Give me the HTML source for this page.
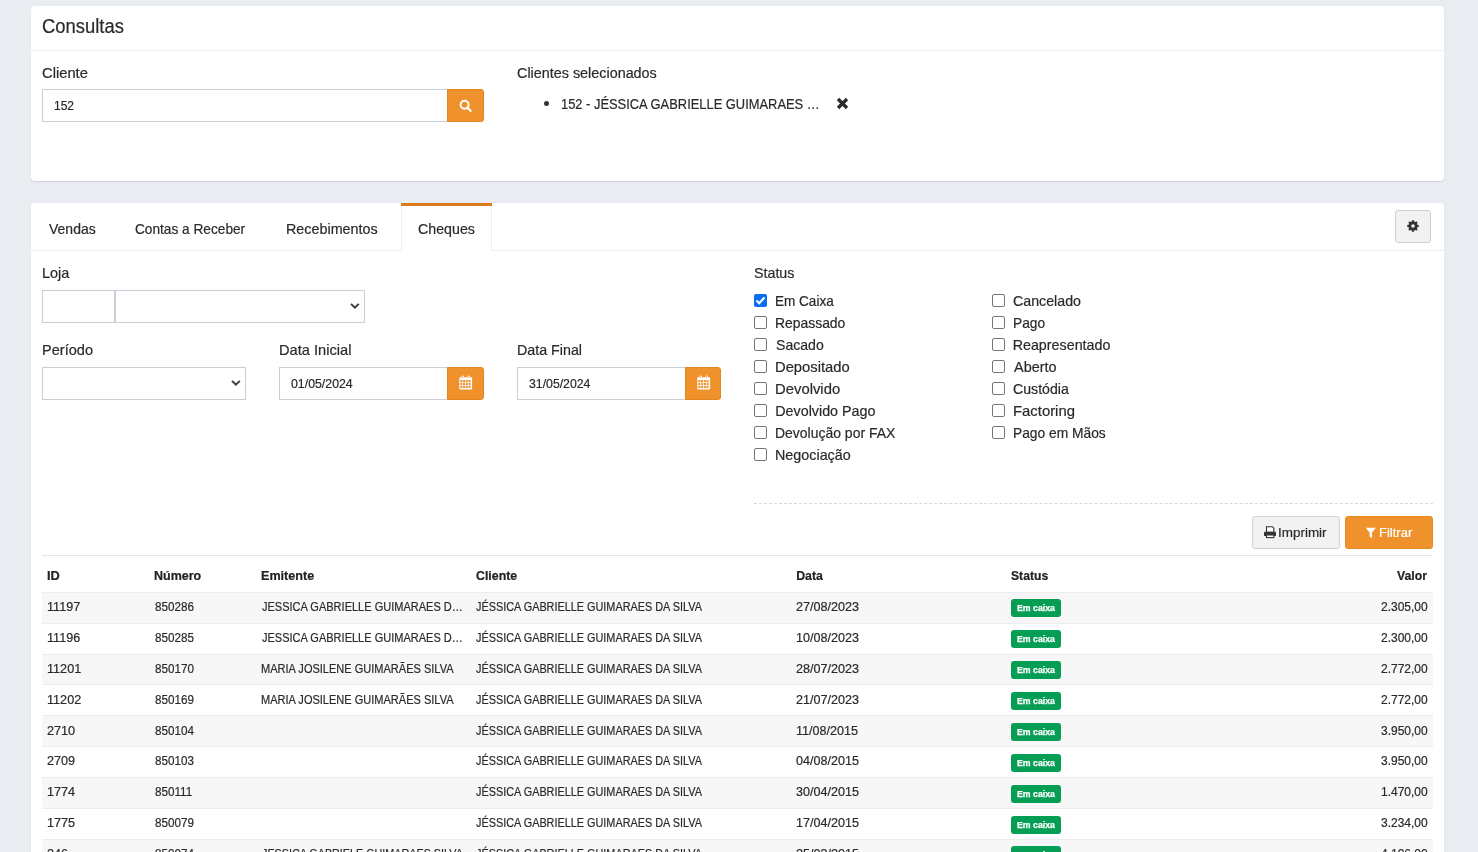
<!DOCTYPE html>
<html><head><meta charset="utf-8"><style>
html,body{margin:0;padding:0;}
body{width:1478px;height:852px;overflow:hidden;background:#e9edf2;position:relative;font-family:"Liberation Sans",sans-serif;}
.t{position:absolute;white-space:nowrap;line-height:1;transform-origin:0 0;-webkit-text-stroke:0.2px currentColor;}
.b{position:absolute;}
</style></head><body><div id="w" style="position:absolute;left:0;top:0;width:1478px;height:852px;overflow:hidden;will-change:transform;">
<div class="b" style="left:31px;top:6px;width:1413px;height:175px;background:#fff;border-radius:4px;box-shadow:0 1px 1px rgba(0,0,0,.12);"></div>
<div class="b" style="left:31px;top:50px;width:1413px;height:1px;background:#f0f0f0;"></div>
<div class="t" style="left:41.98px;top:16.98px;font-size:19.4px;color:#2a2a2a;font-weight:normal;transform:scaleX(0.9494);">Consultas</div>
<div class="t" style="left:41.76px;top:66.15px;font-size:14px;color:#2a2a2a;font-weight:normal;transform:scaleX(1.0525);">Cliente</div>
<div class="b" style="left:42px;top:89px;width:406px;height:33px;border:1px solid #c9ced8;box-sizing:border-box;background:#fff;"></div>
<div class="t" style="left:53.70px;top:100.33px;font-size:12.6px;color:#2a2a2a;font-weight:normal;transform:scaleX(0.9503);">152</div>
<div class="b" style="left:447px;top:89px;width:37px;height:33px;background:#f0922b;border:1px solid #e3861f;box-sizing:border-box;border-radius:0 3px 3px 0;"></div>
<svg class="b" style="left:457px;top:98px" width="18" height="18" viewBox="0 0 18 18"><circle cx="7.6" cy="6.8" r="4" fill="none" stroke="#fff" stroke-width="1.9"/><line x1="10.4" y1="9.6" x2="13.6" y2="12.8" stroke="#fff" stroke-width="2.2" stroke-linecap="round"/></svg>
<div class="t" style="left:516.68px;top:66.15px;font-size:14px;color:#2a2a2a;font-weight:normal;transform:scaleX(1.0264);">Clientes selecionados</div>
<div class="b" style="left:544px;top:101px;width:5px;height:5px;background:#333;border-radius:50%;"></div>
<div class="t" style="left:561.03px;top:97.15px;font-size:14px;color:#2a2a2a;font-weight:normal;transform:scaleX(0.9210);">152 - JÉSSICA GABRIELLE GUIMARAES …</div>
<svg class="b" style="left:836px;top:97px" width="13" height="13" viewBox="0 0 13 13"><path d="M2 2 L11 11 M11 2 L2 11" stroke="#2b2b2b" stroke-width="3.3" stroke-linecap="butt"/></svg>
<div class="b" style="left:31px;top:203px;width:1413px;height:697px;background:#fff;border-radius:4px;box-shadow:0 1px 1px rgba(0,0,0,.12);"></div>
<div class="b" style="left:31px;top:250px;width:1413px;height:1px;background:#eeeeee;"></div>
<div class="t" style="left:48.80px;top:221.90px;font-size:14.3px;color:#2a2a2a;font-weight:normal;transform:scaleX(0.9790);">Vendas</div>
<div class="t" style="left:135.42px;top:221.90px;font-size:14.3px;color:#2a2a2a;font-weight:normal;transform:scaleX(0.9560);">Contas a Receber</div>
<div class="t" style="left:286.45px;top:221.90px;font-size:14.3px;color:#2a2a2a;font-weight:normal;transform:scaleX(1.0030);">Recebimentos</div>
<div class="b" style="left:401px;top:203px;width:91px;height:48px;background:#fff;border-left:1px solid #eee;border-right:1px solid #eee;box-sizing:border-box;"></div>
<div class="b" style="left:401px;top:203px;width:91px;height:3px;background:#dc7c1d;"></div>
<div class="t" style="left:418.49px;top:221.90px;font-size:14.3px;color:#2a2a2a;font-weight:normal;transform:scaleX(0.9954);">Cheques</div>
<div class="b" style="left:1395px;top:210px;width:36px;height:33px;background:#f2f2f2;border:1px solid #cfcfcf;box-sizing:border-box;border-radius:3px;"></div>
<svg class="b" style="left:1400px;top:213.3px" width="26" height="26" viewBox="0 0 26 26"><rect x="11.85" y="7.3" width="2.3" height="2.6" transform="rotate(0 13 13)" fill="#333"/><rect x="11.85" y="7.3" width="2.3" height="2.6" transform="rotate(45 13 13)" fill="#333"/><rect x="11.85" y="7.3" width="2.3" height="2.6" transform="rotate(90 13 13)" fill="#333"/><rect x="11.85" y="7.3" width="2.3" height="2.6" transform="rotate(135 13 13)" fill="#333"/><rect x="11.85" y="7.3" width="2.3" height="2.6" transform="rotate(180 13 13)" fill="#333"/><rect x="11.85" y="7.3" width="2.3" height="2.6" transform="rotate(225 13 13)" fill="#333"/><rect x="11.85" y="7.3" width="2.3" height="2.6" transform="rotate(270 13 13)" fill="#333"/><rect x="11.85" y="7.3" width="2.3" height="2.6" transform="rotate(315 13 13)" fill="#333"/><circle cx="13" cy="13" r="4.5" fill="#333"/><circle cx="13" cy="13" r="1.8" fill="#f2f2f2"/></svg>
<div class="t" style="left:41.65px;top:265.90px;font-size:14.3px;color:#2a2a2a;font-weight:normal;transform:scaleX(1.0095);">Loja</div>
<div class="b" style="left:42px;top:290px;width:74px;height:33px;border:1px solid #c9ced8;box-sizing:border-box;"></div>
<div class="b" style="left:114px;top:290px;width:251px;height:33px;border:1px solid #c9ced8;box-sizing:border-box;"></div>
<svg class="b" style="left:350px;top:302px" width="11" height="8" viewBox="0 0 11 8"><path d="M1.0 1.9 L4.9 5.7 L8.8 1.9" fill="none" stroke="#3a3a3a" stroke-width="2"/></svg>
<div class="t" style="left:41.64px;top:342.90px;font-size:14.3px;color:#2a2a2a;font-weight:normal;transform:scaleX(1.0179);">Período</div>
<div class="b" style="left:42px;top:367px;width:204px;height:33px;border:1px solid #c9ced8;box-sizing:border-box;"></div>
<svg class="b" style="left:231px;top:379px" width="11" height="8" viewBox="0 0 11 8"><path d="M1.0 1.9 L4.9 5.7 L8.8 1.9" fill="none" stroke="#3a3a3a" stroke-width="2"/></svg>
<div class="t" style="left:278.83px;top:342.90px;font-size:14.3px;color:#2a2a2a;font-weight:normal;transform:scaleX(1.0246);">Data Inicial</div>
<div class="b" style="left:279px;top:367px;width:169px;height:33px;border:1px solid #c9ced8;box-sizing:border-box;"></div>
<div class="t" style="left:291.17px;top:377.73px;font-size:12.6px;color:#2a2a2a;font-weight:normal;transform:scaleX(0.9790);">01/05/2024</div>
<div class="b" style="left:447px;top:367px;width:37px;height:33px;background:#f0922b;border:1px solid #e3861f;box-sizing:border-box;border-radius:0 3px 3px 0;"></div>
<svg class="b" style="left:459px;top:375px" width="14" height="15" viewBox="0 0 14 15"><rect x="0.3" y="2.2" width="12.8" height="12.2" rx="1" fill="#fff"/><rect x="1.30" y="5.00" width="2.0" height="2.2" fill="#f0922b"/><rect x="1.30" y="7.95" width="2.0" height="2.2" fill="#f0922b"/><rect x="1.30" y="10.90" width="2.0" height="2.2" fill="#f0922b"/><rect x="4.05" y="5.00" width="2.0" height="2.2" fill="#f0922b"/><rect x="4.05" y="7.95" width="2.0" height="2.2" fill="#f0922b"/><rect x="4.05" y="10.90" width="2.0" height="2.2" fill="#f0922b"/><rect x="6.80" y="5.00" width="2.0" height="2.2" fill="#f0922b"/><rect x="6.80" y="7.95" width="2.0" height="2.2" fill="#f0922b"/><rect x="6.80" y="10.90" width="2.0" height="2.2" fill="#f0922b"/><rect x="9.55" y="5.00" width="2.0" height="2.2" fill="#f0922b"/><rect x="9.55" y="7.95" width="2.0" height="2.2" fill="#f0922b"/><rect x="9.55" y="10.90" width="2.0" height="2.2" fill="#f0922b"/><rect x="2.6" y="0.4" width="2.2" height="3.6" rx="1.1" fill="#fff"/><rect x="3.35" y="1.3" width="0.7" height="2" fill="#f0922b"/><rect x="8.6" y="0.4" width="2.2" height="3.6" rx="1.1" fill="#fff"/><rect x="9.35" y="1.3" width="0.7" height="2" fill="#f0922b"/></svg>
<div class="t" style="left:516.86px;top:342.90px;font-size:14.3px;color:#2a2a2a;font-weight:normal;transform:scaleX(0.9979);">Data Final</div>
<div class="b" style="left:517px;top:367px;width:169px;height:33px;border:1px solid #c9ced8;box-sizing:border-box;"></div>
<div class="t" style="left:528.87px;top:377.73px;font-size:12.6px;color:#2a2a2a;font-weight:normal;transform:scaleX(0.9742);">31/05/2024</div>
<div class="b" style="left:685px;top:367px;width:36px;height:33px;background:#f0922b;border:1px solid #e3861f;box-sizing:border-box;border-radius:0 3px 3px 0;"></div>
<svg class="b" style="left:697px;top:375px" width="14" height="15" viewBox="0 0 14 15"><rect x="0.3" y="2.2" width="12.8" height="12.2" rx="1" fill="#fff"/><rect x="1.30" y="5.00" width="2.0" height="2.2" fill="#f0922b"/><rect x="1.30" y="7.95" width="2.0" height="2.2" fill="#f0922b"/><rect x="1.30" y="10.90" width="2.0" height="2.2" fill="#f0922b"/><rect x="4.05" y="5.00" width="2.0" height="2.2" fill="#f0922b"/><rect x="4.05" y="7.95" width="2.0" height="2.2" fill="#f0922b"/><rect x="4.05" y="10.90" width="2.0" height="2.2" fill="#f0922b"/><rect x="6.80" y="5.00" width="2.0" height="2.2" fill="#f0922b"/><rect x="6.80" y="7.95" width="2.0" height="2.2" fill="#f0922b"/><rect x="6.80" y="10.90" width="2.0" height="2.2" fill="#f0922b"/><rect x="9.55" y="5.00" width="2.0" height="2.2" fill="#f0922b"/><rect x="9.55" y="7.95" width="2.0" height="2.2" fill="#f0922b"/><rect x="9.55" y="10.90" width="2.0" height="2.2" fill="#f0922b"/><rect x="2.6" y="0.4" width="2.2" height="3.6" rx="1.1" fill="#fff"/><rect x="3.35" y="1.3" width="0.7" height="2" fill="#f0922b"/><rect x="8.6" y="0.4" width="2.2" height="3.6" rx="1.1" fill="#fff"/><rect x="9.35" y="1.3" width="0.7" height="2" fill="#f0922b"/></svg>
<div class="t" style="left:754.06px;top:265.90px;font-size:14.3px;color:#2a2a2a;font-weight:normal;transform:scaleX(0.9976);">Status</div>
<div class="b" style="left:754px;top:294px;width:13px;height:13px;background:#0b6cf4;border-radius:2px;"></div>
<svg class="b" style="left:754px;top:294px" width="13" height="13" viewBox="0 0 13 13"><path d="M2.5 6.5 L5.2 9.2 L10.5 3.5" fill="none" stroke="#fff" stroke-width="2.1"/></svg>
<div class="t" style="left:775.32px;top:293.90px;font-size:14.3px;color:#2a2a2a;font-weight:normal;transform:scaleX(0.9472);">Em Caixa</div>
<div class="b" style="left:754px;top:316px;width:13px;height:13px;border:1px solid #767676;box-sizing:border-box;border-radius:2px;background:#fff;"></div>
<div class="t" style="left:775.29px;top:315.90px;font-size:14.3px;color:#2a2a2a;font-weight:normal;transform:scaleX(0.9725);">Repassado</div>
<div class="b" style="left:754px;top:338px;width:13px;height:13px;border:1px solid #767676;box-sizing:border-box;border-radius:2px;background:#fff;"></div>
<div class="t" style="left:775.77px;top:337.90px;font-size:14.3px;color:#2a2a2a;font-weight:normal;transform:scaleX(0.9839);">Sacado</div>
<div class="b" style="left:754px;top:360px;width:13px;height:13px;border:1px solid #767676;box-sizing:border-box;border-radius:2px;background:#fff;"></div>
<div class="t" style="left:775.22px;top:359.90px;font-size:14.3px;color:#2a2a2a;font-weight:normal;transform:scaleX(1.0320);">Depositado</div>
<div class="b" style="left:754px;top:382px;width:13px;height:13px;border:1px solid #767676;box-sizing:border-box;border-radius:2px;background:#fff;"></div>
<div class="t" style="left:775.21px;top:381.90px;font-size:14.3px;color:#2a2a2a;font-weight:normal;transform:scaleX(1.0383);">Devolvido</div>
<div class="b" style="left:754px;top:404px;width:13px;height:13px;border:1px solid #767676;box-sizing:border-box;border-radius:2px;background:#fff;"></div>
<div class="t" style="left:775.26px;top:403.90px;font-size:14.3px;color:#2a2a2a;font-weight:normal;">Devolvido Pago</div>
<div class="b" style="left:754px;top:426px;width:13px;height:13px;border:1px solid #767676;box-sizing:border-box;border-radius:2px;background:#fff;"></div>
<div class="t" style="left:775.28px;top:425.90px;font-size:14.3px;color:#2a2a2a;font-weight:normal;transform:scaleX(0.9767);">Devolução por FAX</div>
<div class="b" style="left:754px;top:448px;width:13px;height:13px;border:1px solid #767676;box-sizing:border-box;border-radius:2px;background:#fff;"></div>
<div class="t" style="left:775.25px;top:447.90px;font-size:14.3px;color:#2a2a2a;font-weight:normal;transform:scaleX(1.0029);">Negociação</div>
<div class="b" style="left:991.5px;top:294px;width:13.0px;height:13px;border:1px solid #767676;box-sizing:border-box;border-radius:2px;background:#fff;"></div>
<div class="t" style="left:1013.09px;top:293.90px;font-size:14.3px;color:#2a2a2a;font-weight:normal;transform:scaleX(0.9945);">Cancelado</div>
<div class="b" style="left:991.5px;top:316px;width:13.0px;height:13px;border:1px solid #767676;box-sizing:border-box;border-radius:2px;background:#fff;"></div>
<div class="t" style="left:1012.70px;top:315.90px;font-size:14.3px;color:#2a2a2a;font-weight:normal;transform:scaleX(0.9598);">Pago</div>
<div class="b" style="left:991.5px;top:338px;width:13.0px;height:13px;border:1px solid #767676;box-sizing:border-box;border-radius:2px;background:#fff;"></div>
<div class="t" style="left:1012.65px;top:337.90px;font-size:14.3px;color:#2a2a2a;font-weight:normal;">Reapresentado</div>
<div class="b" style="left:991.5px;top:360px;width:13.0px;height:13px;border:1px solid #767676;box-sizing:border-box;border-radius:2px;background:#fff;"></div>
<div class="t" style="left:1013.80px;top:359.90px;font-size:14.3px;color:#2a2a2a;font-weight:normal;transform:scaleX(1.0110);">Aberto</div>
<div class="b" style="left:991.5px;top:382px;width:13.0px;height:13px;border:1px solid #767676;box-sizing:border-box;border-radius:2px;background:#fff;"></div>
<div class="t" style="left:1013.09px;top:381.90px;font-size:14.3px;color:#2a2a2a;font-weight:normal;transform:scaleX(0.9898);">Custódia</div>
<div class="b" style="left:991.5px;top:404px;width:13.0px;height:13px;border:1px solid #767676;box-sizing:border-box;border-radius:2px;background:#fff;"></div>
<div class="t" style="left:1012.61px;top:403.90px;font-size:14.3px;color:#2a2a2a;font-weight:normal;transform:scaleX(1.0390);">Factoring</div>
<div class="b" style="left:991.5px;top:426px;width:13.0px;height:13px;border:1px solid #767676;box-sizing:border-box;border-radius:2px;background:#fff;"></div>
<div class="t" style="left:1012.70px;top:425.90px;font-size:14.3px;color:#2a2a2a;font-weight:normal;transform:scaleX(0.9648);">Pago em Mãos</div>
<div class="b" style="left:754px;top:503px;width:679px;height:1px;border-top:1px dashed #d3dadd;box-sizing:border-box;"></div>
<div class="b" style="left:1252px;top:516px;width:88px;height:33px;background:#f2f2f2;border:1px solid #d2d2d2;box-sizing:border-box;border-radius:3px;"></div>
<svg class="b" style="left:1263px;top:525px" width="14" height="14" viewBox="0 0 14 14"><path d="M3.5 1.7 H9.3 L10.9 3.3 V7.2 H3.5 Z" fill="#fff" stroke="#333" stroke-width="1.1"/><rect x="1" y="6.8" width="12" height="4.3" rx="0.9" fill="#333"/><rect x="3.5" y="10" width="7.4" height="2.6" fill="#fff" stroke="#333" stroke-width="1.1"/></svg>
<div class="t" style="left:1278.39px;top:525.87px;font-size:13.5px;color:#2a2a2a;font-weight:normal;transform:scaleX(0.9961);">Imprimir</div>
<div class="b" style="left:1345px;top:516px;width:88px;height:33px;background:#f0922b;border:1px solid #e88a22;box-sizing:border-box;border-radius:3px;"></div>
<svg class="b" style="left:1365px;top:527px" width="12" height="12" viewBox="0 0 12 12"><path d="M0.6 0.8H10.9L7 5.6V11.2L4.6 9.6V5.6Z" fill="#fff"/></svg>
<div class="t" style="left:1378.96px;top:525.87px;font-size:13.5px;color:#fff;font-weight:normal;transform:scaleX(0.9636);">Filtrar</div>
<div class="b" style="left:42px;top:555px;width:1391px;height:1px;background:#e6e6e6;"></div>
<div class="t" style="left:46.97px;top:569.59px;font-size:12.3px;color:#222;font-weight:bold;transform:scaleX(1.0388);">ID</div>
<div class="t" style="left:154.19px;top:569.59px;font-size:12.3px;color:#222;font-weight:bold;transform:scaleX(1.0163);">Número</div>
<div class="t" style="left:261.18px;top:569.59px;font-size:12.3px;color:#222;font-weight:bold;transform:scaleX(1.0249);">Emitente</div>
<div class="t" style="left:475.51px;top:569.59px;font-size:12.3px;color:#222;font-weight:bold;transform:scaleX(1.0035);">Cliente</div>
<div class="t" style="left:796.20px;top:569.59px;font-size:12.3px;color:#222;font-weight:bold;">Data</div>
<div class="t" style="left:1010.60px;top:569.59px;font-size:12.3px;color:#222;font-weight:bold;transform:scaleX(0.9881);">Status</div>
<div class="t" style="left:1397.24px;top:569.59px;font-size:12.3px;color:#222;font-weight:bold;transform:scaleX(0.9957);">Valor</div>
<div class="b" style="left:42px;top:592px;width:1391px;height:31px;background:#f7f7f7;border-top:1px solid #ececec;box-sizing:border-box;"></div>
<div class="t" style="left:46.85px;top:600.79px;font-size:12.3px;color:#2a2a2a;font-weight:normal;transform:scaleX(1.0268);">11197</div>
<div class="t" style="left:154.63px;top:600.79px;font-size:12.3px;color:#2a2a2a;font-weight:normal;transform:scaleX(0.9491);">850286</div>
<div class="t" style="left:262.13px;top:600.79px;font-size:12.3px;color:#2a2a2a;font-weight:normal;transform:scaleX(0.8957);">JESSICA GABRIELLE GUIMARAES D…</div>
<div class="t" style="left:476.04px;top:600.79px;font-size:12.3px;color:#2a2a2a;font-weight:normal;transform:scaleX(0.8832);">JÉSSICA GABRIELLE GUIMARAES DA SILVA</div>
<div class="t" style="left:795.77px;top:600.79px;font-size:12.3px;color:#2a2a2a;font-weight:normal;transform:scaleX(1.0223);">27/08/2023</div>
<div class="b" style="left:1011px;top:599px;width:50px;height:18px;background:#069d55;border-radius:3px;"></div>
<div class="t" style="left:1016.73px;top:603.30px;font-size:9.8px;color:#fff;font-weight:bold;transform:scaleX(0.8940);-webkit-text-stroke:0.25px #fff;">Em caixa</div>
<div class="t" style="left:1381.40px;top:600.79px;font-size:12.3px;color:#2a2a2a;font-weight:normal;transform:scaleX(0.9743);">2.305,00</div>
<div class="b" style="left:42px;top:623px;width:1391px;height:31px;background:#fff;border-top:1px solid #ececec;box-sizing:border-box;"></div>
<div class="t" style="left:46.85px;top:631.72px;font-size:12.3px;color:#2a2a2a;font-weight:normal;transform:scaleX(1.0268);">11196</div>
<div class="t" style="left:154.63px;top:631.72px;font-size:12.3px;color:#2a2a2a;font-weight:normal;transform:scaleX(0.9491);">850285</div>
<div class="t" style="left:262.13px;top:631.72px;font-size:12.3px;color:#2a2a2a;font-weight:normal;transform:scaleX(0.8957);">JESSICA GABRIELLE GUIMARAES D…</div>
<div class="t" style="left:476.04px;top:631.72px;font-size:12.3px;color:#2a2a2a;font-weight:normal;transform:scaleX(0.8832);">JÉSSICA GABRIELLE GUIMARAES DA SILVA</div>
<div class="t" style="left:795.77px;top:631.72px;font-size:12.3px;color:#2a2a2a;font-weight:normal;transform:scaleX(1.0223);">10/08/2023</div>
<div class="b" style="left:1011px;top:630px;width:50px;height:18px;background:#069d55;border-radius:3px;"></div>
<div class="t" style="left:1016.73px;top:634.30px;font-size:9.8px;color:#fff;font-weight:bold;transform:scaleX(0.8940);-webkit-text-stroke:0.25px #fff;">Em caixa</div>
<div class="t" style="left:1381.40px;top:631.72px;font-size:12.3px;color:#2a2a2a;font-weight:normal;transform:scaleX(0.9743);">2.300,00</div>
<div class="b" style="left:42px;top:654px;width:1391px;height:30px;background:#f7f7f7;border-top:1px solid #ececec;box-sizing:border-box;"></div>
<div class="t" style="left:46.85px;top:662.65px;font-size:12.3px;color:#2a2a2a;font-weight:normal;transform:scaleX(1.0268);">11201</div>
<div class="t" style="left:154.63px;top:662.65px;font-size:12.3px;color:#2a2a2a;font-weight:normal;transform:scaleX(0.9491);">850170</div>
<div class="t" style="left:261.42px;top:662.65px;font-size:12.3px;color:#2a2a2a;font-weight:normal;transform:scaleX(0.8965);">MARIA JOSILENE GUIMARÃES SILVA</div>
<div class="t" style="left:476.04px;top:662.65px;font-size:12.3px;color:#2a2a2a;font-weight:normal;transform:scaleX(0.8832);">JÉSSICA GABRIELLE GUIMARAES DA SILVA</div>
<div class="t" style="left:795.77px;top:662.65px;font-size:12.3px;color:#2a2a2a;font-weight:normal;transform:scaleX(1.0223);">28/07/2023</div>
<div class="b" style="left:1011px;top:661px;width:50px;height:18px;background:#069d55;border-radius:3px;"></div>
<div class="t" style="left:1016.73px;top:665.30px;font-size:9.8px;color:#fff;font-weight:bold;transform:scaleX(0.8940);-webkit-text-stroke:0.25px #fff;">Em caixa</div>
<div class="t" style="left:1381.40px;top:662.65px;font-size:12.3px;color:#2a2a2a;font-weight:normal;transform:scaleX(0.9743);">2.772,00</div>
<div class="b" style="left:42px;top:684px;width:1391px;height:31px;background:#fff;border-top:1px solid #ececec;box-sizing:border-box;"></div>
<div class="t" style="left:46.85px;top:693.58px;font-size:12.3px;color:#2a2a2a;font-weight:normal;transform:scaleX(1.0268);">11202</div>
<div class="t" style="left:154.63px;top:693.58px;font-size:12.3px;color:#2a2a2a;font-weight:normal;transform:scaleX(0.9491);">850169</div>
<div class="t" style="left:261.42px;top:693.58px;font-size:12.3px;color:#2a2a2a;font-weight:normal;transform:scaleX(0.8965);">MARIA JOSILENE GUIMARÃES SILVA</div>
<div class="t" style="left:476.04px;top:693.58px;font-size:12.3px;color:#2a2a2a;font-weight:normal;transform:scaleX(0.8832);">JÉSSICA GABRIELLE GUIMARAES DA SILVA</div>
<div class="t" style="left:795.77px;top:693.58px;font-size:12.3px;color:#2a2a2a;font-weight:normal;transform:scaleX(1.0223);">21/07/2023</div>
<div class="b" style="left:1011px;top:692px;width:50px;height:18px;background:#069d55;border-radius:3px;"></div>
<div class="t" style="left:1016.73px;top:696.30px;font-size:9.8px;color:#fff;font-weight:bold;transform:scaleX(0.8940);-webkit-text-stroke:0.25px #fff;">Em caixa</div>
<div class="t" style="left:1381.40px;top:693.58px;font-size:12.3px;color:#2a2a2a;font-weight:normal;transform:scaleX(0.9743);">2.772,00</div>
<div class="b" style="left:42px;top:715px;width:1391px;height:31px;background:#f7f7f7;border-top:1px solid #ececec;box-sizing:border-box;"></div>
<div class="t" style="left:46.85px;top:724.51px;font-size:12.3px;color:#2a2a2a;font-weight:normal;transform:scaleX(1.0268);">2710</div>
<div class="t" style="left:154.63px;top:724.51px;font-size:12.3px;color:#2a2a2a;font-weight:normal;transform:scaleX(0.9491);">850104</div>
<div class="t" style="left:476.04px;top:724.51px;font-size:12.3px;color:#2a2a2a;font-weight:normal;transform:scaleX(0.8832);">JÉSSICA GABRIELLE GUIMARAES DA SILVA</div>
<div class="t" style="left:795.77px;top:724.51px;font-size:12.3px;color:#2a2a2a;font-weight:normal;transform:scaleX(1.0223);">11/08/2015</div>
<div class="b" style="left:1011px;top:723px;width:50px;height:18px;background:#069d55;border-radius:3px;"></div>
<div class="t" style="left:1016.73px;top:727.30px;font-size:9.8px;color:#fff;font-weight:bold;transform:scaleX(0.8940);-webkit-text-stroke:0.25px #fff;">Em caixa</div>
<div class="t" style="left:1381.40px;top:724.51px;font-size:12.3px;color:#2a2a2a;font-weight:normal;transform:scaleX(0.9743);">3.950,00</div>
<div class="b" style="left:42px;top:746px;width:1391px;height:31px;background:#fff;border-top:1px solid #ececec;box-sizing:border-box;"></div>
<div class="t" style="left:46.85px;top:755.44px;font-size:12.3px;color:#2a2a2a;font-weight:normal;transform:scaleX(1.0268);">2709</div>
<div class="t" style="left:154.63px;top:755.44px;font-size:12.3px;color:#2a2a2a;font-weight:normal;transform:scaleX(0.9491);">850103</div>
<div class="t" style="left:476.04px;top:755.44px;font-size:12.3px;color:#2a2a2a;font-weight:normal;transform:scaleX(0.8832);">JÉSSICA GABRIELLE GUIMARAES DA SILVA</div>
<div class="t" style="left:795.77px;top:755.44px;font-size:12.3px;color:#2a2a2a;font-weight:normal;transform:scaleX(1.0223);">04/08/2015</div>
<div class="b" style="left:1011px;top:754px;width:50px;height:18px;background:#069d55;border-radius:3px;"></div>
<div class="t" style="left:1016.73px;top:758.30px;font-size:9.8px;color:#fff;font-weight:bold;transform:scaleX(0.8940);-webkit-text-stroke:0.25px #fff;">Em caixa</div>
<div class="t" style="left:1381.40px;top:755.44px;font-size:12.3px;color:#2a2a2a;font-weight:normal;transform:scaleX(0.9743);">3.950,00</div>
<div class="b" style="left:42px;top:777px;width:1391px;height:31px;background:#f7f7f7;border-top:1px solid #ececec;box-sizing:border-box;"></div>
<div class="t" style="left:46.85px;top:786.37px;font-size:12.3px;color:#2a2a2a;font-weight:normal;transform:scaleX(1.0268);">1774</div>
<div class="t" style="left:154.63px;top:786.37px;font-size:12.3px;color:#2a2a2a;font-weight:normal;transform:scaleX(0.9491);">850111</div>
<div class="t" style="left:476.04px;top:786.37px;font-size:12.3px;color:#2a2a2a;font-weight:normal;transform:scaleX(0.8832);">JÉSSICA GABRIELLE GUIMARAES DA SILVA</div>
<div class="t" style="left:795.77px;top:786.37px;font-size:12.3px;color:#2a2a2a;font-weight:normal;transform:scaleX(1.0223);">30/04/2015</div>
<div class="b" style="left:1011px;top:785px;width:50px;height:18px;background:#069d55;border-radius:3px;"></div>
<div class="t" style="left:1016.73px;top:789.30px;font-size:9.8px;color:#fff;font-weight:bold;transform:scaleX(0.8940);-webkit-text-stroke:0.25px #fff;">Em caixa</div>
<div class="t" style="left:1381.40px;top:786.37px;font-size:12.3px;color:#2a2a2a;font-weight:normal;transform:scaleX(0.9743);">1.470,00</div>
<div class="b" style="left:42px;top:808px;width:1391px;height:31px;background:#fff;border-top:1px solid #ececec;box-sizing:border-box;"></div>
<div class="t" style="left:46.85px;top:817.30px;font-size:12.3px;color:#2a2a2a;font-weight:normal;transform:scaleX(1.0268);">1775</div>
<div class="t" style="left:154.63px;top:817.30px;font-size:12.3px;color:#2a2a2a;font-weight:normal;transform:scaleX(0.9491);">850079</div>
<div class="t" style="left:476.04px;top:817.30px;font-size:12.3px;color:#2a2a2a;font-weight:normal;transform:scaleX(0.8832);">JÉSSICA GABRIELLE GUIMARAES DA SILVA</div>
<div class="t" style="left:795.77px;top:817.30px;font-size:12.3px;color:#2a2a2a;font-weight:normal;transform:scaleX(1.0223);">17/04/2015</div>
<div class="b" style="left:1011px;top:816px;width:50px;height:18px;background:#069d55;border-radius:3px;"></div>
<div class="t" style="left:1016.73px;top:820.30px;font-size:9.8px;color:#fff;font-weight:bold;transform:scaleX(0.8940);-webkit-text-stroke:0.25px #fff;">Em caixa</div>
<div class="t" style="left:1381.40px;top:817.30px;font-size:12.3px;color:#2a2a2a;font-weight:normal;transform:scaleX(0.9743);">3.234,00</div>
<div class="b" style="left:42px;top:839px;width:1391px;height:31px;background:#f7f7f7;border-top:1px solid #ececec;box-sizing:border-box;"></div>
<div class="t" style="left:46.85px;top:848.23px;font-size:12.3px;color:#2a2a2a;font-weight:normal;transform:scaleX(1.0268);">246</div>
<div class="t" style="left:154.63px;top:848.23px;font-size:12.3px;color:#2a2a2a;font-weight:normal;transform:scaleX(0.9491);">850074</div>
<div class="t" style="left:262.14px;top:848.23px;font-size:12.3px;color:#2a2a2a;font-weight:normal;transform:scaleX(0.8763);">JESSICA GABRIELE GUIMARAES SILVA</div>
<div class="t" style="left:476.04px;top:848.23px;font-size:12.3px;color:#2a2a2a;font-weight:normal;transform:scaleX(0.8832);">JÉSSICA GABRIELLE GUIMARAES DA SILVA</div>
<div class="t" style="left:795.77px;top:848.23px;font-size:12.3px;color:#2a2a2a;font-weight:normal;transform:scaleX(1.0223);">25/03/2015</div>
<div class="b" style="left:1011px;top:846px;width:50px;height:18px;background:#069d55;border-radius:3px;"></div>
<div class="t" style="left:1016.73px;top:850.30px;font-size:9.8px;color:#fff;font-weight:bold;transform:scaleX(0.8940);-webkit-text-stroke:0.25px #fff;">Em caixa</div>
<div class="t" style="left:1381.40px;top:848.23px;font-size:12.3px;color:#2a2a2a;font-weight:normal;transform:scaleX(0.9743);">4.106,00</div>

</div></body></html>
